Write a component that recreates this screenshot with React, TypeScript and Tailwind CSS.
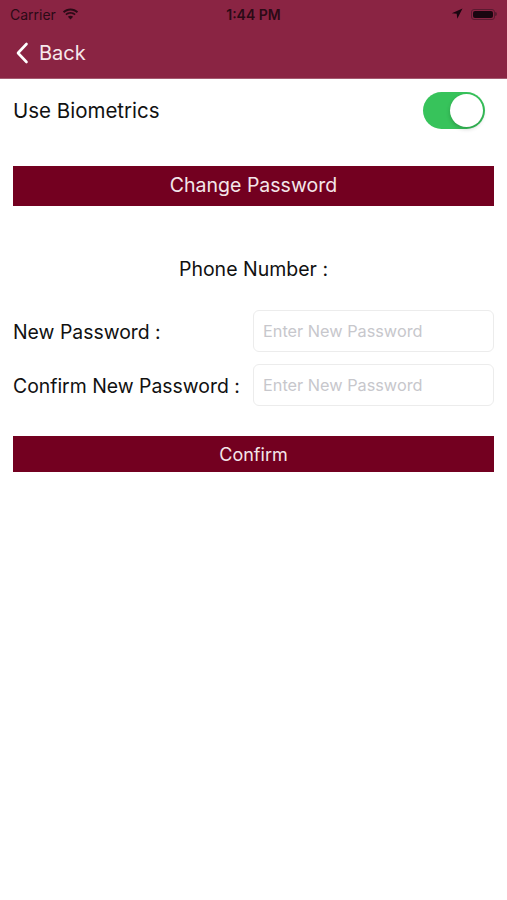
import { useState } from 'react';

function Wifi() {
  return (
    <svg width="17" height="12" viewBox="0 0 17 12" className="fill-[#2b0a16]">
      <path d="M8.5 2.4c2.4 0 4.6.9 6.3 2.5l1.3-1.3C14.1 1.7 11.4.6 8.5.6S2.9 1.7.9 3.6l1.3 1.3C3.9 3.3 6.1 2.4 8.5 2.4z" />
      <path d="M8.5 5.8c1.5 0 2.8.5 3.9 1.5l1.3-1.3C12.3 4.7 10.5 4 8.5 4S4.7 4.7 3.3 6l1.3 1.3c1.1-1 2.4-1.5 3.9-1.5z" />
      <path d="M8.5 9.2l2.6-2.6c-.7-.6-1.6-1-2.6-1s-1.9.4-2.6 1z" transform="translate(0 2.2)" />
    </svg>
  );
}

export default function App() {
  const [bio, setBio] = useState(true);

  return (
    <div className="w-[507px] h-[900px] bg-white font-['Inter','Liberation_Sans',sans-serif] text-[#111]">
      {/* header */}
      <div className="bg-[#8a2443] border-b border-[#a45a70]">
        <div className="h-[28px] flex items-center justify-between px-[10px] text-[14px] text-[#2b0a16]">
          <div className="flex items-center gap-[6px] w-[120px]">
            <span>Carrier</span>
            <Wifi />
          </div>
          <span className="font-semibold">1:44 PM</span>
          <div className="flex items-center justify-end gap-[8px] w-[120px]">
            <svg width="12" height="12" viewBox="0 0 12 12" className="fill-[#1a0610]">
              <path d="M11.5.5L.8 5.2l4.9.6.6 4.9z" />
            </svg>
            <div className="flex items-center">
              <div className="w-[24px] h-[11px] rounded-[3px] border border-[#5a1a30] p-[1px]">
                <div className="w-full h-full rounded-[2px] bg-[#1a0610]" />
              </div>
              <div className="w-[2px] h-[4px] rounded-r-sm bg-[#5a1a30]" />
            </div>
          </div>
        </div>
        <div className="h-[50px] flex items-center pl-[15px] text-white">
          <svg width="14" height="22" viewBox="0 0 14 22" fill="none" stroke="white" strokeWidth="2.6" strokeLinecap="round" strokeLinejoin="round">
            <path d="M11.5 2L3 11l8.5 9" />
          </svg>
          <span className="ml-[10px] text-[20px] text-[#f6e8ec]">Back</span>
        </div>
      </div>

      <div className="px-[13px]">
        {/* biometrics */}
        <div className="flex items-center justify-between pt-[13px] pr-[9px]">
          <span className="text-[20.5px] translate-y-[1px]">Use Biometrics</span>
          <button
            onClick={() => setBio(!bio)}
            className={`w-[62px] h-[37px] rounded-full p-[2px] flex ${bio ? 'bg-[#37c35b] justify-end' : 'bg-[#e5e5ea] justify-start'}`}
          >
            <span className="w-[33px] h-[33px] rounded-full bg-white shadow-[0_2px_4px_rgba(0,0,0,0.2)]" />
          </button>
        </div>

        <button className="mt-[37px] w-full h-[40px] bg-[#730020] text-[19.5px] text-[#f3e6ea]">
          Change Password
        </button>

        <div className="mt-[49px] text-center text-[19.5px]">Phone Number :</div>

        <div className="mt-[26px] flex flex-col gap-[12px]">
          {['New Password :', 'Confirm New Password :'].map((label) => (
            <div key={label} className="flex items-center">
              <span className="flex-1 whitespace-nowrap text-[19.4px] translate-y-[1px]">{label}</span>
              <input
                type="password"
                placeholder="Enter New Password"
                className="w-[241px] shrink-0 h-[42px] rounded-[6px] border border-[#ececec] px-[9px] text-[16.3px] placeholder:text-[#c7c7cc] outline-none"
              />
            </div>
          ))}
        </div>

        <button className="mt-[30px] w-full h-[36px] bg-[#730020] text-[18px] text-[#f3e6ea]">
          Confirm
        </button>
      </div>
    </div>
  );
}
